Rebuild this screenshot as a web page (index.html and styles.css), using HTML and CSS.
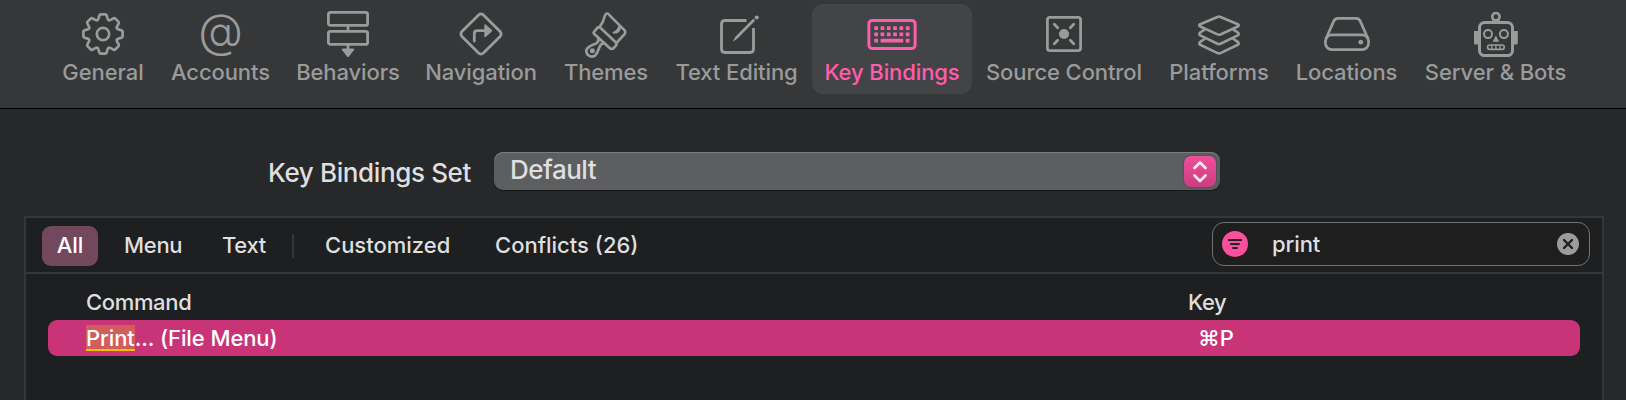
FILE: index.html
```html
<!DOCTYPE html>
<html lang="en">
<head>
  <meta charset="UTF-8">
  <title>Key Bindings</title>
  <link rel="stylesheet" href="styles.css">
</head>
<body>

  <nav class="toolbar">
    <a class="tab">
      <svg class="icon" viewBox="0 0 50 50">
        <defs>
          <path id="tooth" d="M-5.7-13.9C-3.6-14.6-4.6-19.6-2.4-19.6H2.4C4.6-19.6 3.6-14.6 5.7-13.9"/>
        </defs>
        <g transform="translate(25 25)" stroke-width="2.7">
          <circle r="6.2"/>
          <use href="#tooth"/>
          <use href="#tooth" transform="rotate(45)"/>
          <use href="#tooth" transform="rotate(90)"/>
          <use href="#tooth" transform="rotate(135)"/>
          <use href="#tooth" transform="rotate(180)"/>
          <use href="#tooth" transform="rotate(225)"/>
          <use href="#tooth" transform="rotate(270)"/>
          <use href="#tooth" transform="rotate(315)"/>
        </g>
      </svg>
      <span>General</span>
    </a>
    <a class="tab">
      <div class="icon at">@</div>
      <span>Accounts</span>
    </a>
    <a class="tab">
      <svg class="icon" viewBox="0 0 50 50">
        <rect x="5.4" y="3.4" width="39.2" height="13" rx="2"/>
        <rect x="5.4" y="22.4" width="39.2" height="13" rx="2"/>
        <path d="M25 17v5M25 36v5"/>
        <path class="fill" d="M19.6 39.5h10.8q1.4.3.6 1.5L26 47.4q-1 1-2 0L19 41q-.8-1.2.6-1.5z"/>
      </svg>
      <span>Behaviors</span>
    </a>
    <a class="tab">
      <svg class="icon" viewBox="0 0 50 50">
        <rect x="9.8" y="9.8" width="30.4" height="30.4" rx="3.4" transform="rotate(45 25 25)"/>
        <path d="M18.3 32v-7.3q0-3 3-3h8"/>
        <path class="fill" d="M28.3 15.9q.3-1 1.3-.4l6 5.2q1 1 0 2l-6 5.2q-1 .6-1.3-.4z"/>
      </svg>
      <span>Navigation</span>
    </a>
    <a class="tab">
      <svg class="icon" viewBox="0 0 150 150">
        <g stroke-width="8">
          <path d="M57 52Q68 38 71 22Q75 9 83 16L131 64Q135 70 130 76L109 99"/>
          <path d="M40 67L49 57Q54 52 59 57L104 100Q109 105 104 111L97 118Q91 122 86 117L40 75Q36 71 40 67z"/>
          <path d="M51 86Q56 98 44 104Q27 109 19 118Q12 128 21 138Q32 147 43 139Q50 131 55 115Q61 100 72 104"/>
        </g>
        <path class="fill" d="M113 46L120 56Q119 74 97 74L94 70Q111 64 113 46z"/>
        <circle class="fill" cx="34" cy="125" r="7.5"/>
      </svg>
      <span>Themes</span>
    </a>
    <a class="tab">
      <svg class="icon" viewBox="0 0 50 50">
        <path stroke-linecap="butt" d="M34.5 11.5H13q-3.5 0-3.5 3.5v25q0 3.5 3.5 3.5h25q3.5 0 3.5-3.5V19"/>
        <path class="fill" d="M20.7 32.7l2.6-5L40.4 10.4q1.1-.8 2 0t0 2.1L25.3 29.8z"/>
        <circle class="fill" cx="44.7" cy="8.5" r="2.1"/>
      </svg>
      <span>Text Editing</span>
    </a>
    <a class="tab selected">
      <svg class="icon" viewBox="0 0 50 50">
        <rect x="1.9" y="11.4" width="46.2" height="28.2" rx="3.5" stroke-width="3"/>
        <path stroke-width="3.7" stroke-linecap="butt" stroke-dasharray="3.7 2.6" d="M7.3 19.2h35.2M7.3 25.4h35.2"/>
        <path stroke-width="3.7" stroke-linecap="butt" d="M7.3 31.7h3.7M13.6 31.7h22.6M38.8 31.7h3.7"/>
      </svg>
      <span>Key Bindings</span>
    </a>
    <a class="tab">
      <svg class="icon" viewBox="0 0 50 50">
        <rect x="8.4" y="8.4" width="33.2" height="33.2" rx="2.5"/>
        <circle class="fill" cx="25" cy="25" r="5.1"/>
        <path d="M15.3 15.3l3.4 3.4M34.7 15.3l-3.4 3.4M15.3 34.7l3.4-3.4M34.7 34.7l-3.4-3.4"/>
      </svg>
      <span>Source Control</span>
    </a>
    <a class="tab">
      <svg class="icon" viewBox="0 0 50 50">
        <g stroke-width="2.7">
          <path d="M23.5 7.9q1.5-.7 3 0l17.3 7.3q1.8 1.1 0 2.3l-17.3 7.9q-1.5.7-3 0L6.2 17.5q-1.8-1.2 0-2.3z"/>
          <path d="M10.5 20.6l-4.3 2.9q-1.8 1.7 0 2.9l17.3 8.3q1.5.7 3 0l17.3-8.3q1.8-1.2 0-2.9l-4.3-2.9"/>
          <path d="M10.5 30l-4.3 2.9q-1.8 1.7 0 2.9l17.3 8.3q1.5.7 3 0l17.3-8.3q1.8-1.2 0-2.9L39.5 30"/>
        </g>
      </svg>
      <span>Platforms</span>
    </a>
    <a class="tab">
      <svg class="icon" viewBox="0 0 50 50">
        <rect x="3.4" y="25.9" width="43.2" height="14.7" rx="6.5"/>
        <path d="M4.2 29.3L11.8 12q1.3-2.6 4.2-2.6h18q2.9 0 4.2 2.6l7.6 17.3"/>
        <circle class="fill" cx="38.8" cy="33.2" r="2.4"/>
      </svg>
      <span>Locations</span>
    </a>
    <a class="tab">
      <svg class="icon" viewBox="0 0 50 50">
        <rect x="8.5" y="13.6" width="33" height="33" rx="5" stroke-width="3"/>
        <circle cx="24.9" cy="7.7" r="3.7" stroke-width="2.6"/>
        <path class="fill" d="M20 15l1.8-4.4h6.4L30 15z"/>
        <path class="fill" d="M3 22h4v13.5H4.2q-1.2 0-1.2-1.2zM43 22h3.8v12.3q0 1.2-1.2 1.2H43z"/>
        <circle cx="17" cy="25.1" r="4" stroke-width="2"/>
        <circle cx="32.9" cy="25.1" r="4" stroke-width="2"/>
        <path class="fill" d="M24.9 26.5l3.3 6.3h-6.6z"/>
        <rect x="16.6" y="36" width="16.6" height="4.3" rx="2" stroke-width="1.7"/>
        <path stroke-width="1.3" stroke-linecap="butt" d="M20.8 36v4.3M24.9 36v4.3M29 36v4.3"/>
      </svg>
      <span>Server &amp; Bots</span>
    </a>
  </nav>

  <div class="set-row">
    <label class="set-label">Key Bindings Set</label>
    <div class="select">
      <span class="value">Default</span>
      <div class="stepper">
        <svg viewBox="0 0 32 31"><path d="M10.5 12L16 6.5l5.5 5.5M10.5 19.5L16 25l5.5-5.5"/></svg>
      </div>
    </div>
  </div>

  <main class="panel">
    <div class="filter-bar">
      <button class="filter active">All</button>
      <button class="filter menu">Menu</button>
      <button class="filter text">Text</button>
      <div class="divider"></div>
      <button class="filter customized">Customized</button>
      <button class="filter">Conflicts (26)</button>
      <div class="search">
        <svg class="search-icon" viewBox="0 0 26 26">
          <circle cx="13" cy="13" r="13"/>
          <path d="M6 9h14M8.3 13h9.4M10.3 17h5.4"/>
        </svg>
        <span>print</span>
        <svg class="clear-icon" viewBox="0 0 22 22">
          <circle cx="11" cy="11" r="11"/>
          <path d="M7 7l8 8M15 7l-8 8"/>
        </svg>
      </div>
    </div>
    <div class="columns">
      <span class="command">Command</span>
      <span>Key</span>
    </div>
    <div class="binding">
      <span class="name"><mark>Print</mark>... (File Menu)</span>
      <span>⌘P</span>
    </div>
  </main>

</body>
</html>
```

FILE: styles.css
```css
* {
  box-sizing: border-box;
}

body {
  margin: 0;
  height: 400px;
  overflow: hidden;
  background: #27282a;
  color: #dfdfdf;
  font-family: Inter, "Liberation Sans", sans-serif;
  font-size: 22px;
  font-weight: 500;
  letter-spacing: -0.1px;
}

/* Toolbar */

.toolbar {
  display: grid;
  grid-template-columns: 108px 127px 128px 138px 112px 149px 162px 182px 128px 127px 171px;
  height: 109px;
  padding: 4px 0 0 49px;
  background: #363739;
  border-bottom: 1px solid #000;
}

.tab {
  display: flex;
  flex-direction: column;
  align-items: center;
  height: 90px;
  margin: 0 1px;
  padding-top: 5px;
  border-radius: 11px;
  color: #9a9b9b;
  white-space: nowrap;
}

.tab span {
  line-height: 26px;
}

.tab.selected {
  background: #434446;
  color: #ff5cae;
}

.icon {
  width: 50px;
  height: 50px;
  fill: none;
  stroke: currentColor;
  stroke-width: 2.8;
  stroke-linecap: round;
  stroke-linejoin: round;
}

.icon .fill {
  fill: currentColor;
  stroke: none;
}

.at {
  font-size: 46px;
  font-weight: 300;
  line-height: 43px;
  text-align: center;
}

/* Set picker */

.set-row {
  display: flex;
  height: 107px;
  padding: 43px 0 0 268px;
  font-size: 26px;
  letter-spacing: -0.38px;
}

.set-label {
  width: 226px;
  line-height: 42px;
}

.select {
  display: flex;
  justify-content: space-between;
  width: 726px;
  height: 38px;
  padding: 4px 4px 0 16px;
  border-radius: 9px;
  background: #5d5e60;
  box-shadow: inset 0 1px #7b7c7d, 0 1px 1px #18191a;
  line-height: 28px;
}

.value {
  letter-spacing: -0.5px;
}

.stepper {
  width: 32px;
  height: 31px;
  border-radius: 7px;
  background: linear-gradient(#ee509c, #ca3d80);
  box-shadow: 0 0 2px #3b3c3d;
}

.stepper svg {
  display: block;
  fill: none;
  stroke: #fbe4ef;
  stroke-width: 2.8;
  stroke-linecap: round;
  stroke-linejoin: round;
}

/* Bindings list */

.panel {
  width: 1580px;
  height: 200px;
  margin-left: 24px;
  border: 2px solid #353638;
  border-bottom: none;
  background: #1e1f21;
}

.filter-bar {
  display: flex;
  align-items: center;
  height: 56px;
  padding: 2px 12px 0 16px;
  border-bottom: 2px solid #353638;
}

.filter {
  height: 40px;
  padding: 0 0 2px;
  border: none;
  background: none;
  color: #dfdfdf;
  font: inherit;
  letter-spacing: 0;
  text-align: left;
  white-space: nowrap;
}

.filter.active {
  width: 56px;
  border-radius: 9px;
  background: #73485d;
  color: #fff;
  text-align: center;
}

.menu {
  width: 98px;
  margin-left: 26px;
  letter-spacing: -0.3px;
}

.text {
  width: 70px;
  letter-spacing: -0.3px;
}

.divider {
  width: 2px;
  height: 24px;
  background: #353638;
}

.customized {
  width: 170px;
  margin-left: 31px;
}

.search {
  display: flex;
  align-items: center;
  width: 378px;
  height: 44px;
  margin: -4px 0 0 auto;
  padding: 0 10px 0 9px;
  border: 1px solid #737373;
  border-radius: 12px;
  background: #1e1e1e;
}

.search-icon {
  width: 26px;
  height: 26px;
  margin-right: 24px;
  fill: #fc4f9e;
  stroke: #1e1e1e;
  stroke-width: 2;
}

.clear-icon {
  width: 22px;
  height: 22px;
  margin-left: auto;
  fill: #9c9c9c;
  stroke: #1e1e1e;
  stroke-width: 2.4;
  stroke-linecap: round;
}

.search circle {
  stroke: none;
}

.columns {
  display: flex;
  height: 46px;
  padding: 14px 0 0 60px;
  line-height: 28px;
  letter-spacing: -0.35px;
}

.command {
  width: 1102px;
}

.binding {
  display: flex;
  width: 1532px;
  height: 36px;
  margin-left: 22px;
  padding-left: 38px;
  border-radius: 9px;
  background: #c93378;
  color: #fff;
  line-height: 36px;
}

.name {
  width: 1112px;
}

mark {
  background: #d25d5d;
  box-shadow: inset 0 -2px #f5c400;
  color: inherit;
}
```
